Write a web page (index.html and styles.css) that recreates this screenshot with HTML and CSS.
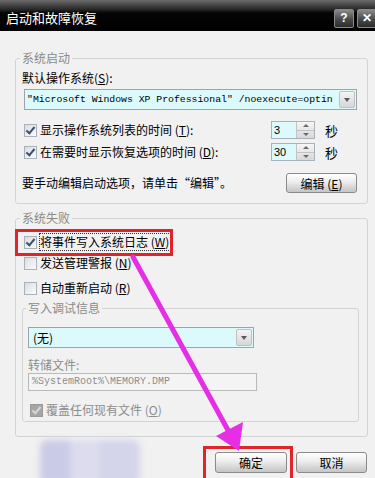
FILE: index.html
```html
<!DOCTYPE html>
<html lang="zh-CN">
<head>
    <meta charset="UTF-8">
    <meta name="viewport" content="width=device-width, initial-scale=1.0">
    <title>启动和故障恢复</title>
    <link rel="stylesheet" href="styles.css">
</head>
<body>

<div class="window">
    <div class="titlebar">
        <span class="title">启动和故障恢复</span>
        <div class="caption-btns">
            <span class="cap-btn">?</span>
            <span class="cap-btn">✕</span>
        </div>
    </div>

    <div class="content">
        <fieldset class="group startup">
            <legend>系统启动</legend>
            <div class="label">默认操作系统(<u>S</u>):</div>
            <div class="combo combo-os">
                <span class="combo-text mono">"Microsoft Windows XP Professional" /noexecute=optin</span>
                <span class="combo-arrow"></span>
            </div>

            <div class="opt-row first">
                <span class="check checked"></span>
                <span class="opt-text">显示操作系统列表的时间 (<u>T</u>):</span>
                <span class="spin"><span class="spin-val">3</span><span class="spin-btns"><i class="up"></i><i class="down"></i></span></span>
                <span class="unit">秒</span>
            </div>
            <div class="opt-row">
                <span class="check checked"></span>
                <span class="opt-text">在需要时显示恢复选项的时间 (<u>D</u>):</span>
                <span class="spin"><span class="spin-val">30</span><span class="spin-btns"><i class="up"></i><i class="down"></i></span></span>
                <span class="unit">秒</span>
            </div>

            <div class="edit-row">
                <span class="opt-text">要手动编辑启动选项，请单击“编辑”。</span>
                <span class="btn btn-edit">编辑 (<u>E</u>)</span>
            </div>
        </fieldset>

        <fieldset class="group failure">
            <legend>系统失败</legend>
            <div class="fail-row r1">
                <span class="check checked"></span>
                <span class="opt-text focus">将事件写入系统日志 (<u>W</u>)</span>
            </div>
            <div class="fail-row r2">
                <span class="check"></span>
                <span class="opt-text">发送管理警报 (<u>N</u>)</span>
            </div>
            <div class="fail-row r3">
                <span class="check"></span>
                <span class="opt-text">自动重新启动 (<u>R</u>)</span>
            </div>

            <fieldset class="group debug">
                <legend>写入调试信息</legend>
                <div class="combo combo-debug">
                    <span class="combo-text">(无)</span>
                    <span class="combo-arrow"></span>
                </div>
                <div class="label dim dump-label">转储文件:</div>
                <div class="textbox mono">%SystemRoot%\MEMORY.DMP</div>
                <div class="fail-row overwrite">
                    <span class="check disabled"></span>
                    <span class="opt-text dim">覆盖任何现有文件 (<u>O</u>)</span>
                </div>
            </fieldset>
        </fieldset>
    </div>

    <div class="footer">
        <div class="smudge"></div>
        <span class="btn btn-ok">确定</span>
        <span class="btn btn-cancel">取消</span>
    </div>

    <!-- tutorial annotations drawn over the dialog -->
    <svg class="annot" width="375" height="478" viewBox="0 0 375 478">
        <rect x="16.5" y="230.5" width="155" height="24" fill="none" stroke="#e0242a" stroke-width="3"/>
        <rect x="204.5" y="447.5" width="87" height="34" fill="none" stroke="#e0242a" stroke-width="3"/>
        <line x1="133" y1="257" x2="229" y2="432" stroke="#e62ee6" stroke-width="5" stroke-linecap="round"/>
        <polygon points="239,451 216,436 243,422" fill="#e62ee6"/>
    </svg>
</div>

</body>
</html>
```

FILE: styles.css
```css
body {
    margin: 0;
    background: #f1f1f1;
    font-family: "Noto Sans CJK SC", "Liberation Sans", sans-serif;
    font-size: 12px;
    color: #000;
}
u {
    text-decoration: underline;
    text-underline-offset: 1px;
}
.window {
    position: relative;
    width: 375px;
    height: 478px;
    overflow: hidden;
    background: #f1f1f1;
}

/* title bar */
.titlebar {
    height: 31px;
    display: flex;
    align-items: center;
    justify-content: space-between;
    background: linear-gradient(#6b6b6b 0, #555 3px, #2b2b2b 9px, #050505 13px, #000 100%);
}
.title {
    color: #fff;
    font-size: 13px;
    line-height: 16px;
    margin-left: 6px;
    margin-top: 4px;
}
.caption-btns {
    display: flex;
    gap: 3px;
    margin-top: 6px;
    margin-right: -2px;
}
.cap-btn {
    width: 18px;
    height: 17px;
    border: 1px solid #8a8a8a;
    border-radius: 2px;
    background: linear-gradient(#8a8a8a, #4a4a4a 55%, #2c2c2c);
    color: #fff;
    font-family: "Liberation Sans", sans-serif;
    font-weight: bold;
    font-size: 12px;
    line-height: 17px;
    text-align: center;
}

/* group boxes */
.content {
    padding-top: 20px;
}
.group {
    margin: 0;
    border: 1px solid #d3d3d3;
    border-radius: 3px;
    min-width: 0;
}
.group legend {
    padding: 0 2px;
    margin-left: -2px;
    line-height: 14px;
    color: #8a8a8a;
}
.startup {
    margin: 0 7px 0 15px;
    padding: 6px 6px 10px 6px;
}
.failure {
    margin: 7px 7px 0 15px;
    padding: 9px 6px 14px 6px;
}
.debug {
    margin: 5px 2px 0 0;
    padding: 12px 5px 3px 5px;
}

.label {
    height: 14px;
    line-height: 14px;
}
.dim {
    color: #8d8d8d;
}
.mono {
    font-family: "Liberation Mono", monospace;
    font-size: 10px;
}

/* combo boxes */
.combo {
    height: 21px;
    box-sizing: border-box;
    border: 1px solid #9aa6ad;
    background: #dcfafb;
    display: flex;
    align-items: center;
    justify-content: space-between;
}
.combo-os {
    margin: 4px 0 0 2px;
    width: 333px;
}
.combo-debug {
    width: 226px;
}
.combo-text {
    padding-left: 4px;
    white-space: nowrap;
    overflow: hidden;
}
.combo-os .combo-text {
    font-size: 9.8px;
    padding-left: 2px;
}
.combo-arrow {
    width: 14px;
    height: 15px;
    margin-right: 1px;
    flex-shrink: 0;
    border: 1px solid #c0c0c0;
    border-radius: 2px;
    background: linear-gradient(#f4f4f4, #d6d6d6);
    position: relative;
}
.combo-arrow::after {
    content: "";
    position: absolute;
    left: 4px;
    top: 6px;
    border-left: 3px solid transparent;
    border-right: 3px solid transparent;
    border-top: 4px solid #5a5a5a;
}

/* option rows */
.opt-row {
    display: flex;
    align-items: center;
    height: 18px;
    margin-top: 4px;
}
.opt-row.first {
    margin-top: 11px;
}
.opt-row .opt-text {
    flex: 1;
}
.check {
    width: 11px;
    height: 11px;
    margin: 0 3px 0 2px;
    flex-shrink: 0;
    border: 1px solid #a9b2bb;
    background: linear-gradient(135deg, #dadde0, #fbfbfb);
    position: relative;
}
.check.checked::after {
    content: "";
    position: absolute;
    left: 3px;
    top: 0;
    width: 3px;
    height: 7px;
    border: solid #3c4f73;
    border-width: 0 2px 2px 0;
    transform: rotate(40deg);
}
.check.disabled {
    background: #a6a6a6;
    border-color: #9a9a9a;
}
.check.disabled::after {
    content: "";
    position: absolute;
    left: 3px;
    top: 0;
    width: 3px;
    height: 7px;
    border: solid #d8d8d8;
    border-width: 0 2px 2px 0;
    transform: rotate(40deg);
}
.opt-text {
    line-height: 16px;
    white-space: nowrap;
}
.focus {
    outline: 1px dotted #333;
    outline-offset: 0;
    padding-right: 1px;
}

/* spin boxes */
.spin {
    display: flex;
    width: 44px;
    height: 18px;
    box-sizing: border-box;
    border: 1px solid #a7b3ba;
    background: #dcfafb;
}
.spin-val {
    flex: 1;
    font-family: "Liberation Sans", sans-serif;
    font-size: 11px;
    line-height: 16px;
    padding-left: 2px;
}
.spin-btns {
    width: 17px;
    display: flex;
    flex-direction: column;
    border-left: 1px solid #c3c3c3;
    background: linear-gradient(#f6f6f6, #d8d8d8);
}
.spin-btns i {
    flex: 1;
    position: relative;
}
.spin-btns i.up {
    border-bottom: 1px solid #c3c3c3;
}
.spin-btns i::after {
    content: "";
    position: absolute;
    left: 6px;
    top: 2px;
    border-left: 3px solid transparent;
    border-right: 3px solid transparent;
}
.spin-btns i.up::after {
    border-bottom: 3px solid #6a6a6a;
}
.spin-btns i.down::after {
    border-top: 3px solid #6a6a6a;
}
.unit {
    width: 12px;
    margin: 0 24px 0 10px;
    font-size: 13px;
}

.edit-row {
    display: flex;
    align-items: center;
    justify-content: space-between;
    height: 20px;
    margin-top: 12px;
}

/* buttons */
.btn {
    display: inline-flex;
    align-items: center;
    justify-content: center;
    height: 21px;
    box-sizing: border-box;
    border: 1px solid #8b8b8b;
    border-radius: 3px;
    background: linear-gradient(#ffffff, #ececec 45%, #d2d2d2 80%, #c6c6c6);
    white-space: nowrap;
}
.btn-edit {
    width: 71px;
    height: 20px;
    margin-right: 4px;
}

/* failure section */
.fail-row {
    display: flex;
    align-items: center;
    height: 16px;
}
.fail-row.r2 {
    margin-top: 5px;
}
.fail-row.r3 {
    margin-top: 9px;
}
.dump-label {
    margin-top: 10px;
}
.textbox {
    margin-top: 1px;
    width: 229px;
    height: 18px;
    box-sizing: border-box;
    border: 1px solid #b9b9b9;
    background: #f4f4f4;
    color: #8d8d8d;
    line-height: 16px;
    padding-left: 3px;
}
.fail-row.overwrite {
    margin-top: 11px;
}

/* bottom buttons */
.footer {
    display: flex;
    align-items: flex-start;
    padding: 3px 8px 0 0;
    gap: 9px;
}
.smudge {
    width: 100px;
    height: 44px;
    margin: 0 auto 0 40px;
    background: linear-gradient(90deg, #cacbe6 0 30%, #dcdcee 30% 60%, #d4d4ea 60%);
    filter: blur(3px);
    border-radius: 8px;
}
.btn-ok {
    margin-top: 12px;
    width: 72px;
}
.btn-cancel {
    margin-top: 12px;
    width: 71px;
}

.annot {
    position: absolute;
    left: 0;
    top: 0;
    pointer-events: none;
}
```
